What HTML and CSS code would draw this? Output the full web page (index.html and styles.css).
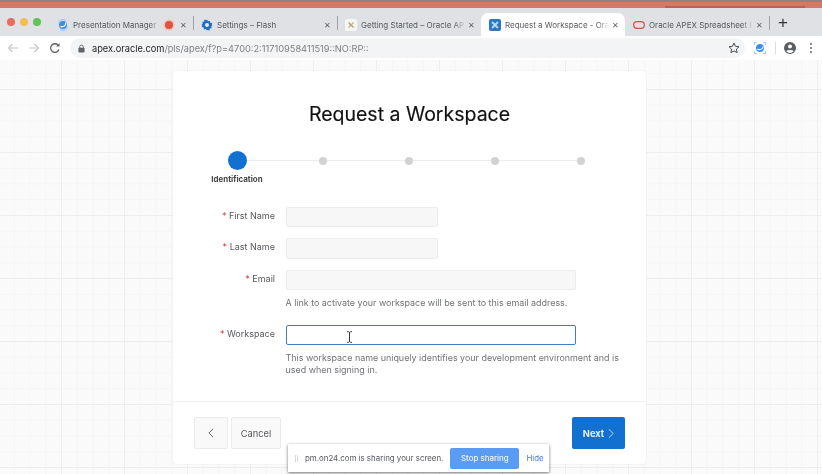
FILE: index.html
```html
<!DOCTYPE html>
<html lang="en">
<head>
<meta charset="utf-8">
<title>Request a Workspace</title>
<link rel="stylesheet" href="styles.css">
</head>
<body>
<div class="screen">
  <div class="desktop"></div>
  <div class="tabstrip">
    <div class="lights"><i class="light red"></i><i class="light amber"></i><i class="light green"></i></div>
    <div class="tab">
      <svg class="fav" viewBox="0 0 12 12"><circle cx="6" cy="6" r="4" fill="#3f8fe0"/><path d="M1.500 4.500a4.800 4.800 0 0 1 7.500-3M10.500 7.500A4.800 4.800 0 0 1 3 10.500" stroke="#a9cdee" stroke-width="1.400" fill="none"/><path d="M3.500 7.500a4 3 0 0 0 5-4" stroke="#fff" stroke-width="1.200" fill="none"/></svg>
      <span class="tab-title short">Presentation Manager</span>
      <i class="rec"></i>
      <span class="close">✕</span>
    </div>
    <div class="tab sep">
      <svg class="fav" viewBox="0 0 12 12"><path d="M6 .8l1.100 1.500 1.800-.4.500 1.800 1.800.5-.4 1.800L11.500 6l-1.200 1.300.4 1.800-1.800.5-.5 1.800-1.800-.4L6 11.500 4.900 10l-1.800.4-.5-1.800-1.800-.5.4-1.800L.5 6l1.200-1.300-.4-1.800 1.800-.5.5-1.800 1.800.4z" fill="#1f6fc9"/><circle cx="6" cy="6" r="2" fill="#e6e8ec"/></svg>
      <span class="tab-title">Settings – Flash</span>
      <span class="close">✕</span>
    </div>
    <div class="tab sep">
      <svg class="fav" viewBox="0 0 12 12"><rect width="12" height="12" rx="2" fill="#f6f6f2"/><path d="M3.500 3.500l5 5" stroke="#9a9a90" stroke-width="1.300"/><path d="M8.500 3.500l-5 5" stroke="#c9b06a" stroke-width="1.300"/></svg>
      <span class="tab-title">Getting Started – Oracle AP</span>
      <span class="close">✕</span>
    </div>
    <div class="tab active">
      <svg class="fav" viewBox="0 0 12 12"><rect width="12" height="12" rx="2" fill="#2b78c2"/><path d="M3 3l6 6M9 3L3 9" stroke="#bcd9f2" stroke-width="1.800"/></svg>
      <span class="tab-title">Request a Workspace - Ora</span>
      <span class="close">✕</span>
    </div>
    <div class="tab">
      <svg class="fav" viewBox="0 0 12 12"><rect x=".7" y="2.700" width="10.600" height="6.600" rx="3.300" fill="none" stroke="#d2523f" stroke-width="1.200"/></svg>
      <span class="tab-title">Oracle APEX Spreadsheet I</span>
      <span class="close">✕</span>
    </div>
    <div class="tab-end"><span class="plus">+</span></div>
  </div>

  <div class="toolbar">
    <svg class="tool" viewBox="0 0 12 12"><path d="M11 6H1.500M5.500 2L1.500 6l4 4" fill="none" stroke="#c4c6ca" stroke-width="1.100"/></svg>
    <svg class="tool" viewBox="0 0 12 12"><path d="M1 6h9.500M6.500 2l4 4-4 4" fill="none" stroke="#c4c6ca" stroke-width="1.100"/></svg>
    <svg class="tool" viewBox="0 0 12 12"><path d="M10 7.500A4.300 4.300 0 1 1 9 3" fill="none" stroke="#5f6368" stroke-width="1.300"/><path d="M10.500 1v3.500H7z" fill="#5f6368"/></svg>
    <div class="omnibox">
      <svg class="lock" viewBox="0 0 8 10"><path d="M2 4.500V3a2 2 0 0 1 4 0v1.500" fill="none" stroke="#5f6368" stroke-width="1"/><rect x=".5" y="4" width="7" height="5.500" rx="1" fill="#5f6368"/></svg>
      <span class="url"><b>apex.oracle.com</b>/pls/apex/f?p=4700:2:11710958411519::NO:RP::</span>
      <svg class="star" viewBox="0 0 12 12"><path d="M6 1l1.500 3.300 3.500.4-2.600 2.400.7 3.500L6 8.900l-3.100 1.700.7-3.500L1 4.700l3.500-.4z" fill="none" stroke="#4a4d52" stroke-width="1"/></svg>
    </div>
    <svg class="ext" viewBox="0 0 12 12"><path d="M.5 3V.5H3M9 .5h2.500V3M11.500 9v2.500H9M3 11.500H.5V9" fill="none" stroke="#a9cdee" stroke-width="1"/><circle cx="6" cy="6" r="4" fill="#3f8fe0"/><path d="M3.200 7a3.500 2.500 0 0 0 5.600-2.500" stroke="#fff" stroke-width="1.100" fill="none"/></svg>
    <i class="tool-sep"></i>
    <svg class="avatar" viewBox="0 0 12 12"><circle cx="6" cy="6" r="6" fill="#5a5d62"/><circle cx="6" cy="4.500" r="2" fill="#fff"/><path d="M2.200 9.200c1-1.600 6.600-1.600 7.600 0a5 5 0 0 1-7.600 0z" fill="#fff"/></svg>
    <div class="kebab"><i></i><i></i><i></i></div>
  </div>

  <main class="canvas">
    <section class="card">
      <h1 class="title">Request a Workspace</h1>
      <ol class="steps">
        <li class="step current"><span class="dot"></span><span class="step-label">Identification</span></li>
        <li class="step"><span class="dot"></span></li>
        <li class="step"><span class="dot"></span></li>
        <li class="step"><span class="dot"></span></li>
        <li class="step"><span class="dot"></span></li>
      </ol>
      <form class="form">
        <div class="row">
          <label class="label"><em>*</em> First Name</label>
          <div class="field"><div class="input narrow"></div></div>
        </div>
        <div class="row">
          <label class="label"><em>*</em> Last Name</label>
          <div class="field"><div class="input narrow"></div></div>
        </div>
        <div class="row">
          <label class="label"><em>*</em> Email</label>
          <div class="field"><div class="input"></div><p class="help">A link to activate your workspace will be sent to this email address.</p></div>
        </div>
        <div class="row">
          <label class="label"><em>*</em> Workspace</label>
          <div class="field"><div class="input focus">
            <svg class="ibeam" viewBox="0 0 7 12"><path d="M1 .7h1.500l1 .8 1-.8H6M3.500 1.500v9M1 11.300h1.500l1-.8 1 .8H6" fill="none" stroke="#333" stroke-width="1"/></svg>
          </div><p class="help">This workspace name uniquely identifies your development environment and is used when signing in.</p></div>
        </div>
      </form>
      <div class="actions">
        <button type="button" class="btn back"><svg class="chev" viewBox="0 0 7 12"><path d="M6 1L1 6l5 5" fill="none" stroke="#555" stroke-width="1.100"/></svg></button>
        <button type="button" class="btn cancel">Cancel</button>
        <button type="button" class="btn next">Next <svg class="chev" viewBox="0 0 7 12"><path d="M1 1l5 5-5 5" fill="none" stroke="#cfe2f6" stroke-width="1.100"/></svg></button>
      </div>
    </section>
  </main>

  <div class="sharebar">
    <span class="grip"></span>
    <span class="share-text">pm.on24.com is sharing your screen.</span>
    <span class="stop">Stop sharing</span>
    <span class="hide">Hide</span>
  </div>
</div>
</body>
</html>
```
FILE: styles.css
```css
* { box-sizing: border-box; }
html, body { margin: 0; padding: 0; }
body { width: 822px; height: 474px; overflow: hidden; background: #fff; font-family: Inter, "Liberation Sans", sans-serif; }
.screen { position: relative; width: 822px; height: 474px; display: flex; flex-direction: column; overflow: hidden; filter: blur(0.4px); }

.desktop { height: 8px; flex: none; background:
  linear-gradient(90deg, transparent 665px, #b9644a 665px, #b9644a 805px, transparent 805px) 0 6px / 100% 2px no-repeat,
  linear-gradient(#8a8482 0 2px, #cf7d5f 2px); }

.tabstrip { height: 28px; flex: none; display: flex; align-items: flex-end; background: #dfe1e4; }
.lights { width: 49px; height: 28px; flex: none; display: flex; gap: 5px; padding: 10px 0 0 7px; }
.light { width: 8px; height: 8px; border-radius: 50%; }
.red { background: #ee6a5f; }
.amber { background: #f4bd4f; }
.green { background: #5fc454; }

.tab { position: relative; width: 144px; height: 23px; flex: none; display: flex; align-items: center; padding: 0 5px 0 8px; color: #55585c; font-size: 8px; }
.tab.sep::before { content: ""; position: absolute; left: 0; top: 3px; height: 14px; width: 1px; background: #9ea1a5; }
.tab.active { background: #fff; border-radius: 7px 7px 0 0; }
.fav { width: 12px; height: 12px; flex: none; margin-right: 4px; }
.tab-title { flex: 1; min-width: 0; white-space: nowrap; overflow: hidden; -webkit-mask-image: linear-gradient(90deg, #000 88%, transparent); mask-image: linear-gradient(90deg, #000 88%, transparent); }
.tab-title.short { flex: 0 0 87px; }
.rec { width: 8px; height: 8px; margin-left: 5px; border-radius: 50%; background: #e2503f; box-shadow: 0 0 0 1.500px #f3c0b8; }
.rec + .close { margin-left: 5px; }
.close { flex: none; width: 10px; text-align: center; font-size: 8px; color: #5f6368; }
.tab-end { flex: 1; height: 23px; position: relative; padding-left: 8px; }
.tab-end::before { content: ""; position: absolute; left: 0; top: 3px; height: 14px; width: 1px; background: #9ea1a5; }
.plus { display: block; width: 12px; font: 400 17px/19px "Liberation Sans", sans-serif; color: #333; text-align: center; }

.toolbar { height: 24px; flex: none; display: flex; align-items: center; padding: 0 8px 0 7px; background: #fff; }
.tool { width: 12px; height: 12px; flex: none; margin-right: 9px; }
.omnibox { width: 675px; height: 20px; flex: none; display: flex; align-items: center; padding: 0 5px 0 8px; border-radius: 10px; background: #f3f4f5; }
.lock { width: 7px; height: 9px; flex: none; margin-right: 7px; }
.url { flex: 1; font-size: 9.240px; color: #7d8085; white-space: nowrap; }
.url b { font-weight: 400; color: #222; }
.star { width: 12px; height: 12px; flex: none; }
.ext { width: 12px; height: 12px; flex: none; margin-left: 9px; }
.tool-sep { width: 1px; height: 12px; flex: none; margin-left: 9px; background: #dcdde0; }
.avatar { width: 12px; height: 12px; flex: none; margin-left: 8px; }
.kebab { flex: none; margin-left: 14px; display: flex; flex-direction: column; gap: 2px; }
.kebab i { width: 2px; height: 2px; border-radius: 50%; background: #5f6368; }

.canvas { flex: 1; min-height: 0; padding: 11px 0 0 173px; background-color: #fbfafb;
  background-image:
    linear-gradient(90deg, #eeeef0 1px, transparent 1px),
    linear-gradient(#eeeef0 1px, transparent 1px),
    linear-gradient(90deg, #f5f5f6 1px, transparent 1px),
    linear-gradient(#f5f5f6 1px, transparent 1px);
  background-size: 63px 63px, 63px 63px, 15.750px 15.750px, 15.750px 15.750px;
  background-position: -2px 29px, -2px 29px, -2px 29px, -2px 29px; }

.card { width: 473px; height: 393px; display: flex; flex-direction: column; background: #fff; border-radius: 2px; box-shadow: 0 0 1px rgba(0, 0, 0, .2); padding: 0 21px; }
.title { margin: 30px 0 0; font-size: 19.500px; line-height: 26px; font-weight: 400; text-align: center; color: #111; -webkit-text-stroke: .15px #111; }

.steps { position: relative; display: flex; margin: 24px 0 0; padding: 0; list-style: none; height: 36px; }
.steps::before { content: ""; position: absolute; left: 43px; right: 43px; top: 9px; height: 1px; background: #ececee; }
.step { position: relative; width: 86px; display: flex; flex-direction: column; align-items: center; }
.dot { width: 8px; height: 8px; flex: none; margin-top: 5.500px; border-radius: 50%; background: #d2d2d2; }
.current .dot { width: 19px; height: 19px; margin-top: 0; background: #1270d0; }
.step-label { margin-top: 3px; font-size: 7.900px; line-height: 12px; font-weight: 700; color: #444; white-space: nowrap; }

.form { display: flex; flex-direction: column; gap: 11px; margin-top: 19.500px; }
.row { display: flex; }
.label { width: 81px; height: 20px; flex: none; margin-right: 10.500px; text-align: right; font-size: 9px; line-height: 17px; color: #55585c; }
.label em { font-style: normal; color: #d0413a; }
.field { flex: 1; min-width: 0; }
.input { position: relative; width: 290.500px; height: 20.500px; background: #f7f7f7; border: 1px solid #ececec; border-radius: 2px; }
.narrow { width: 152.500px; }
.focus { background: #fff; border: 1px solid #3f7fbc; }
.ibeam { position: absolute; left: 59px; top: 5px; width: 7px; height: 12px; }
.help { margin: 6.500px 0 4.500px; font-size: 8.940px; line-height: 12.500px; color: #6f7276; }
.row:last-child .help { margin-bottom: 0; }

.actions { display: flex; gap: 3px; margin: auto 0 15px; padding-top: 16px; position: relative; }
.actions::before { content: ""; position: absolute; left: -21px; right: -21px; top: 0; height: 1px; background: #f3f3f4; }
.btn { height: 32px; padding: 0; border: 1px solid #ebebeb; border-radius: 2px; background: #f9f9f9; font: 400 9.300px Inter, "Liberation Sans", sans-serif; color: #55585c; display: flex; align-items: center; justify-content: center; gap: 4px; }
.back { width: 34px; }
.back .chev { width: 6px; height: 10px; }
.cancel { width: 50px; }
.next { width: 53px; margin-left: auto; border: 0; background: #1270d0; color: #e8f1fb; font-weight: 700; }
.next .chev { width: 6px; height: 11px; }

.sharebar { position: absolute; left: 288px; top: 444px; width: 261px; height: 28px; display: flex; align-items: center; padding-left: 7px; background: #fff; box-shadow: 0 1px 3px rgba(0, 0, 0, .55); font-size: 7.900px; color: #55585c; }
.grip { width: 3px; height: 7px; flex: none; margin-right: 7px; border-left: 1px solid #d8d8d8; border-right: 1px solid #d8d8d8; }
.share-text { flex: none; white-space: nowrap; }
.stop { flex: none; width: 69px; height: 21px; margin-left: 7px; border-radius: 2px; background: #5a9bf3; color: #f0f5fd; font-weight: 500; line-height: 21px; text-align: center; }
.hide { flex: none; margin-left: 7px; color: #4a80d6; }
```
